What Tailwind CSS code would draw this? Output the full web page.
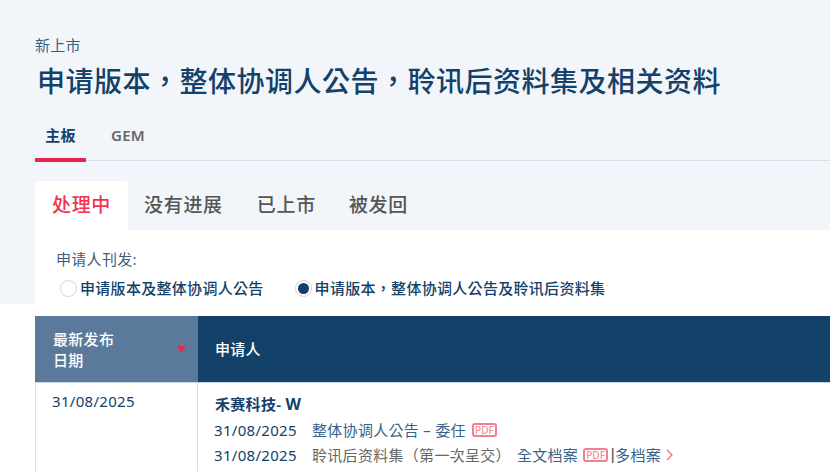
<!DOCTYPE html>
<html lang="zh-TW"><head><meta charset="utf-8">
<script src="https://cdn.jsdelivr.net/npm/@tailwindcss/browser@4"></script>
</head>
<body class="bg-white overflow-hidden font-['Noto_Sans','Noto_Sans_CJK_TC',sans-serif]">
<div class="h-[471px] w-[830px] overflow-hidden tracking-[0.3px]">
  <div class="h-[304px] bg-[#f2f6fa] pl-[35px] flex flex-col">
    <div class="pt-[35px] text-[15px] leading-[20px] text-[#3d5f7f]">新上市</div>
    <h1 class="mt-[4px] pl-[2px] text-[28px] tracking-[0.5px] leading-[44px] font-medium text-[#134169] whitespace-nowrap">申请版本，整体协调人公告，聆讯后资料集及相关资料</h1>
    <div class="mt-[17px] flex h-[41px] border-b border-[#d3dfeb] text-[15px] font-semibold">
      <div class="w-[51px] h-[42px] border-b-[4px] border-[#e8264a] text-center leading-[30px] text-[#134169]">主板</div>
      <div class="ml-[25px] leading-[30px] text-[#666]">GEM</div>
    </div>
    <div class="mt-[20px] flex h-[49px] text-[19px] tracking-[0.7px] font-medium text-[#555] whitespace-nowrap">
      <div class="w-[93px] bg-white rounded-t-[4px] text-center leading-[49px] text-[#f5304f]">处理中</div>
      <div class="ml-[16px] leading-[49px]">没有进展</div>
      <div class="ml-[34px] leading-[49px]">已上市</div>
      <div class="ml-[33px] leading-[49px]">被发回</div>
    </div>
    <div class="flex-1 bg-white pl-[21px] pt-[19px]">
      <div class="text-[15px] leading-[20px] text-[#3d5f7f]">申请人刊发:</div>
      <div class="mt-[9px] flex items-center text-[15px] font-medium leading-[20px] text-[#134169] whitespace-nowrap">
        <span class="ml-[4px] size-[17px] rounded-full border border-[#d4d4d4] bg-white"></span>
        <span class="ml-[3px]">申请版本及整体协调人公告</span>
        <span class="ml-[31px] size-[17px] rounded-full border border-[#d4d4d4] bg-white flex items-center justify-center"><span class="size-[11px] rounded-full bg-[#134169]"></span></span>
        <span class="ml-[3px]">申请版本，整体协调人公告及聆讯后资料集</span>
      </div>
    </div>
  </div>
  <div class="pl-[35px] pt-[12px]">
    <div class="flex h-[67px] border-b border-[#c6d4e2] text-[15px] font-medium text-white">
      <div class="w-[163px] bg-[#5b7a9b] pl-[18px] pt-[1px] flex items-center relative leading-[21px]">
        <div>最新发布<br>日期</div>
        <svg class="absolute left-[142px] top-[30px]" width="9" height="7" viewBox="0 0 9 7"><path d="M0 0H9L4.500 7Z" fill="#e8264a"/></svg>
      </div>
      <div class="flex-1 bg-[#134169] pl-[17px] pt-[1px] flex items-center">申请人</div>
    </div>
    <div class="flex h-[100px] border-l border-[#d3dfeb] text-[15px]">
      <div class="w-[162px] pl-[16px] pt-[8px] leading-[20px] text-[#134169] border-r border-[#d3dfeb]">31/08/2025</div>
      <div class="pl-[16px] pt-[11px] text-[#134169] whitespace-nowrap">
        <div class="pl-[1px] font-semibold leading-[20px]">禾赛科技- <span class="font-bold text-[16px]">W</span></div>
        <div class="mt-[6px] flex items-center leading-[20px]">
          <span class="w-[98px]">31/08/2025</span>
          <span class="text-[#3a6288]">整体协调人公告 – 委任</span>
          <span class="ml-[6px] w-[25px] h-[14px] rounded-[3px] border-2 border-[#f2808f] text-[10px] font-medium tracking-normal leading-[10px] text-center text-[#f58c9c]">PDF</span>
        </div>
        <div class="mt-[5px] flex items-center leading-[20px]">
          <span class="w-[98px]">31/08/2025</span>
          <span class="text-[#666]">聆讯后资料集（第一次呈交）</span>
          <span class="ml-[6px] text-[#3a6288]">全文档案</span>
          <span class="ml-[5px] w-[25px] h-[14px] rounded-[3px] border-2 border-[#f2808f] text-[10px] font-medium tracking-normal leading-[10px] text-center text-[#f58c9c]">PDF</span>
          <span class="ml-[2px] w-[5px] text-center text-[#555] text-[17px] tracking-normal leading-[20px] font-['Liberation_Sans',sans-serif]">|</span>
          <span class="text-[#3a6288]">多档案</span>
          <svg class="ml-[5px]" width="7" height="12" viewBox="0 0 7 12"><path d="M1 1L6 6L1 11" fill="none" stroke="#f2697f" stroke-width="1.200"/></svg>
        </div>
      </div>
    </div>
  </div>
</div>
</body></html>
